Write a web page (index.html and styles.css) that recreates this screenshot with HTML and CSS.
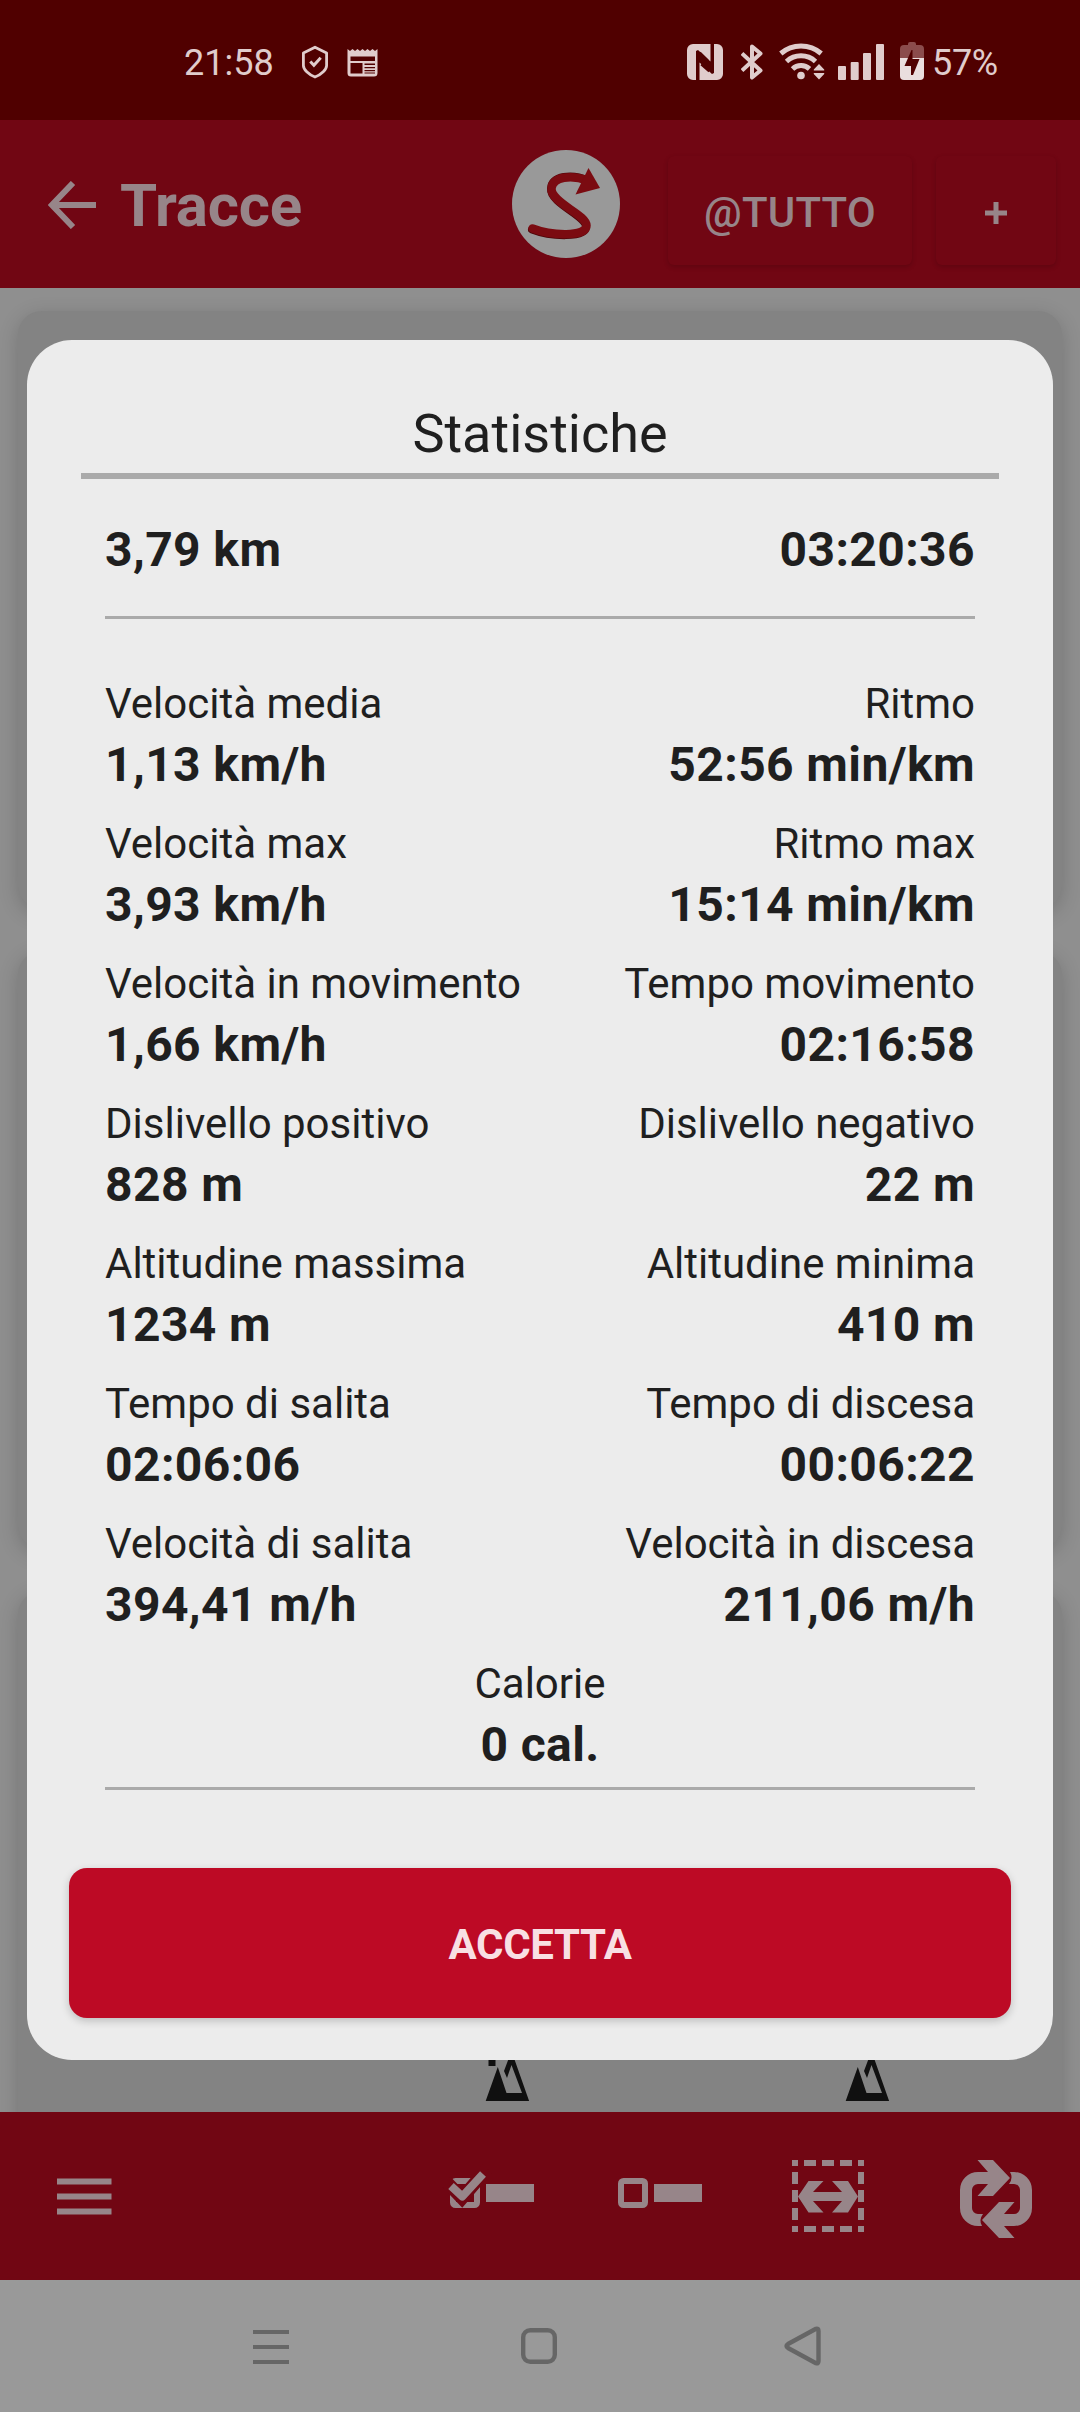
FILE: index.html
```html
<!DOCTYPE html>
<html lang="it">
<head>
<meta charset="utf-8">
<title>Tracce</title>
<link rel="stylesheet" href="styles.css">
</head>
<body>
<div class="screen">
  <div class="status">
    <span class="clock">21:58</span>
    <svg class="i-shield" width="28" height="34" viewBox="0 0 28 34" fill="none" stroke="currentColor"><path stroke-width="2.8" stroke-linejoin="round" d="M14 2.200 25.600 8v12.500c0 4-5 9-11.600 11.500C7.400 29.500 2.400 24.500 2.400 20.500V8Z"/><path stroke-width="3" d="m9.300 16.500 3.600 3.800 6.800-7.500"/></svg>
    <svg class="i-news" width="31" height="28" viewBox="0 0 31 28" fill="currentColor"><path fill-rule="evenodd" d="M.5 0 3 2l2.500-2L8 2l2.500-2L13 2l2.500-2L18 2l2.500-2L23 2l2.500-2L28 2l2.500-2v24a3.500 3.500 0 0 1-3.500 3.500H4A3.500 3.500 0 0 1 .5 24ZM3.500 7.500V12H28V7.500ZM3.500 14v10.500H15.500V14ZM17.500 14.500v1.500H28v-1.500ZM17.500 18v1.300H28V18ZM17.500 21v1.300H28V21ZM17.500 23.500v1H28v-1Z"/></svg>
    <div class="status-right">
      <svg width="36" height="36" viewBox="0 0 36 36"><path fill="currentColor" d="M6 0H23.500V17.500L11 6 9 7V36H6a6 6 0 0 1-6-6V6a6 6 0 0 1 6-6ZM27 0h3a6 6 0 0 1 6 6v24a6 6 0 0 1-6 6H12.500V18.500L25 30l2-1Z"/><path d="m12.500 9 8 8m-6 3 8 7" stroke="#500000" stroke-width="3.200"/></svg>
      <svg class="i-bt" width="22" height="36" viewBox="0 0 22 36" fill="none" stroke="currentColor" stroke-width="4" stroke-linejoin="round"><path d="M1 9.500 19.500 26.500 11 33.500V2.500L19.500 9.500 1 26.500"/></svg>
      <svg class="i-wifi" width="46" height="38" viewBox="0 0 46 38" fill="none" stroke="currentColor" stroke-width="5"><path d="M1.800 11.500a31 31 0 0 1 40.400 0M7.500 19.500a21.500 21.500 0 0 1 29 0M13.500 27a12.500 12.500 0 0 1 17-.2"/><g fill="currentColor" stroke="none"><circle cx="22" cy="33.500" r="3.800"/><path d="M34.800 27.500 40 22l5.200 5.500v1H34.800ZM34.800 31h10.400v1L40 37.500 34.800 32Z"/></g></svg>
      <svg class="i-signal" width="46" height="36" viewBox="0 0 46 36" fill="currentColor"><rect y="22" width="8" height="14" rx="1"/><rect x="12.700" y="18" width="8" height="18" rx="1"/><rect x="25" y="9" width="8" height="27" rx="1"/><rect x="38" width="8" height="36" rx="1"/></svg>
      <svg class="i-battery" width="24" height="38" viewBox="0 0 24 38"><path fill="#8b4c4c" d="M0 16V7a4 4 0 0 1 4-4h4V2a2 2 0 0 1 2-2h4a2 2 0 0 1 2 2v1h4a4 4 0 0 1 4 4v9Z"/><path fill="#eadede" d="M0 16h24v18a4 4 0 0 1-4 4H4a4 4 0 0 1-4-4Z"/><path fill="#500000" d="M11.500 8 4.500 24h6.500v9h2l6.500-16h-7V8Z"/></svg>
      <span class="percent">57%</span>
    </div>
  </div>

  <div class="header">
    <svg class="i-back" width="48" height="48" viewBox="0 0 48 48" fill="none" stroke="currentColor" stroke-width="6"><path d="M25 2 4 24l21 22M3 24h45"/></svg>
    <h1 class="title">Tracce</h1>
    <svg class="logo" width="108" height="108" viewBox="0 0 108 108"><circle cx="54" cy="54" r="54" fill="#999"/><path d="M20 79.500c18 7 54 9 54-3 0-11-36-23-35-38 1-13 21-15 37-8" fill="none" stroke="#4c0609" stroke-width="8" stroke-linecap="round"/><path d="M20.500 78.500c18 7 54 9 54-3 0-11-36-23-35-37 1-12 20-14 36-8" fill="none" stroke="#7b0b11" stroke-width="8.500" stroke-linecap="round"/><path d="M76.500 18 88 38 63.500 44.500Z" fill="#7b0b11"/></svg>
    <button class="hbtn hbtn-all">@TUTTO</button>
    <button class="hbtn hbtn-add" aria-label="+"><svg width="22" height="22" viewBox="0 0 22 22" stroke="currentColor" stroke-width="5"><path d="M11 0v22M0 11h22"/></svg></button>
  </div>

  <div class="tracks">
    <div class="track"></div>
    <div class="track"></div>
    <div class="track track-last">
      <svg class="peaks" width="46" height="54" viewBox="0 0 46 54"><path fill="#101010" d="M3.500 13h7v6h-7ZM.5 54.500 12.800 20 21.500 46h15.500L26.500 18 22 31l-3-7L26.500 4 44.300 54.500Z"/></svg>
      <svg class="peaks" width="46" height="54" viewBox="0 0 46 54"><path fill="#101010" d="M.5 54.500 12.800 20 21.500 46h15.500L26.500 18 22 31l-3-7L26.500 4 44.300 54.500Z"/></svg>
    </div>
  </div>

  <div class="toolbar">
    <svg class="tool tool-menu" viewBox="0 0 168 168" fill="currentColor"><path d="M57 66.500h54.500v6H57ZM57 81.500h54.500v6H57ZM57 96.500h54.500v6H57Z"/></svg>
    <svg class="tool" viewBox="0 0 168 168" fill="none" stroke="currentColor"><rect x="45" y="69" width="24" height="24" rx="2.500" stroke-width="6"/><path d="M38 69.500 54 86 79 57" stroke="#710613" stroke-width="13"/><path d="M43 74 54.300 84.500 75 62" stroke-width="8" stroke-linejoin="round"/><path d="M78 72h48v18H78Z" fill="currentColor" stroke="none"/></svg>
    <svg class="tool" viewBox="0 0 168 168"><rect x="45" y="69" width="24" height="24" rx="2.500" fill="none" stroke="currentColor" stroke-width="6"/><path d="M78 72h48v18H78Z" fill="currentColor"/></svg>
    <svg class="tool" viewBox="0 0 168 168" fill="currentColor"><path d="M51 48v72M117 48v72" stroke="currentColor" stroke-width="6" stroke-dasharray="6 6 12 6 12 6 12 6 6"/><path d="M60 51h48M60 117h48" stroke="currentColor" stroke-width="6" stroke-dasharray="12 6"/><path d="M54 84.500 64.500 69H79.500L69 80H98L88 69h16L114 84.500 104 100.500H88L98 89H69l10.500 11.500h-15Z"/></svg>
    <svg class="tool" viewBox="0 0 168 168" fill="currentColor"><g id="half"><path d="M76 72H66a6 6 0 0 0-6 6v18a6 6 0 0 0 6 6h5q-4.500 6-1 12h-4a18 18 0 0 1-18-18V78a18 18 0 0 1 18-18h10L65.500 48H81L98 66 81 84H65.500Z"/></g><use href="#half" transform="rotate(180 84 87)"/></svg>
  </div>

  <div class="navbar">
    <svg width="36" height="36" viewBox="0 0 36 36" fill="currentColor"><path d="M0 2h36v4H0ZM0 17h36v4H0ZM0 32h36v4H0Z"/></svg>
    <svg width="36" height="36" viewBox="0 0 36 36" fill="none" stroke="currentColor" stroke-width="4.400"><rect x="2.200" y="2.200" width="31.600" height="31.600" rx="7"/></svg>
    <svg width="38" height="40" viewBox="0 0 38 40" fill="none" stroke="currentColor" stroke-width="4.400" stroke-linejoin="round"><path d="M32 2.800Q34.500 2 34.500 5V35Q34.500 38 32 37.200L4 22Q1 20 4 18Z"/></svg>
  </div>

  <div class="dialog">
    <h2 class="dialog-title">Statistiche</h2>
    <div class="summary"><b>3,79 km</b><b>03:20:36</b></div>
    <div class="stats">
      <div class="stat"><span>Velocità media</span><b>1,13 km/h</b></div>
      <div class="stat"><span>Ritmo</span><b>52:56 min/km</b></div>
      <div class="stat"><span>Velocità max</span><b>3,93 km/h</b></div>
      <div class="stat"><span>Ritmo max</span><b>15:14 min/km</b></div>
      <div class="stat"><span>Velocità in movimento</span><b>1,66 km/h</b></div>
      <div class="stat"><span>Tempo movimento</span><b>02:16:58</b></div>
      <div class="stat"><span>Dislivello positivo</span><b>828 m</b></div>
      <div class="stat"><span>Dislivello negativo</span><b>22 m</b></div>
      <div class="stat"><span>Altitudine massima</span><b>1234 m</b></div>
      <div class="stat"><span>Altitudine minima</span><b>410 m</b></div>
      <div class="stat"><span>Tempo di salita</span><b>02:06:06</b></div>
      <div class="stat"><span>Tempo di discesa</span><b>00:06:22</b></div>
      <div class="stat"><span>Velocità di salita</span><b>394,41 m/h</b></div>
      <div class="stat"><span>Velocità in discesa</span><b>211,06 m/h</b></div>
      <div class="stat stat-wide"><span>Calorie</span><b>0 cal.</b></div>
    </div>
    <button class="accept">ACCETTA</button>
  </div>
</div>
</body>
</html>
```
FILE: styles.css
```css
* { box-sizing: border-box; }
body { margin: 0; font-family: Roboto, sans-serif; }
h1, h2 { margin: 0; }
svg { display: block; flex: none; }
button { border: 0; padding: 0; font-family: inherit; }

.screen {
  position: relative;
  display: flex;
  flex-direction: column;
  width: 1080px;
  height: 2412px;
  overflow: hidden;
  background: #8f8f8f;
}

.status {
  display: flex;
  align-items: center;
  height: 120px;
  padding: 3px 83px 0 184px;
  background: #500000;
  color: #e0cccc;
  font-size: 36px;
}
.clock, .percent { line-height: 42px; padding-top: 2px; }
.clock { width: 117px; }
.i-shield { margin-right: 18px; }
.i-news { margin-top: 2px; }
.status-right { display: flex; align-items: center; margin-left: auto; }
.i-bt { margin-left: 18px; }
.i-wifi { margin: 0 0 1px 16px; }
.i-signal { margin-left: 13px; }
.i-battery { margin: 0 8px 2px 16px; }
.percent { width: 65px; white-space: nowrap; letter-spacing: -.3px; }

.header {
  display: flex;
  align-items: center;
  height: 168px;
  padding: 0 24px 0 48px;
  background: #710613;
  color: #978589;
}
.i-back { margin-top: 1px; }
.title {
  width: 392px;
  padding-top: 4px;
  margin-left: 24px;
  font-size: 60px;
  line-height: 70px;
  font-weight: 700;
  letter-spacing: -.2px;
}
.hbtn {
  display: flex;
  align-items: center;
  justify-content: center;
  height: 109px;
  margin-top: 13px;
  padding-top: 4px;
  border-radius: 6px;
  background: #710613;
  color: #978589;
  font-size: 42px;
  font-weight: 500;
  letter-spacing: .2px;
  box-shadow: 0 2px 5px rgba(0, 0, 0, .16);
}
.hbtn-all { width: 244px; margin-left: 48px; }
.hbtn-add { width: 120px; margin-left: 24px; }

.tracks {
  display: flex;
  flex-direction: column;
  gap: 42px;
  height: 1824px;
  padding: 23px 18px 0;
  overflow: hidden;
}
.track {
  flex: none;
  height: 598px;
  border-radius: 24px;
  background: #838383;
  box-shadow: 0 5px 20px rgba(0, 0, 0, .18);
}
.track-last {
  display: flex;
  gap: 314px;
  padding: 456px 0 0 467px;
}

.toolbar {
  position: relative;
  display: flex;
  height: 168px;
  background: #710613;
  color: #978589;
}
.tool { width: 168px; height: 168px; }
.tool-menu { margin-right: auto; }

.navbar {
  display: flex;
  align-items: center;
  height: 132px;
  padding-left: 253px;
  gap: 232px;
  background: #999;
  color: #666;
}
.navbar svg:last-child { margin-left: -5px; }

.dialog {
  position: absolute;
  left: 27px;
  top: 340px;
  display: flex;
  flex-direction: column;
  width: 1026px;
  height: 1720px;
  padding: 62px 42px 42px;
  border-radius: 45px;
  background: #ececec;
  color: #1f1f1f;
}
.dialog-title {
  margin: 0 12px;
  padding-bottom: 7px;
  border-bottom: 6px solid #aaa;
  font-size: 54px;
  line-height: 64px;
  font-weight: 400;
  text-align: center;
}
.summary {
  display: flex;
  justify-content: space-between;
  margin: 43px 36px 0;
  padding-bottom: 38px;
  border-bottom: 3px solid #aaa;
  font-size: 48px;
  line-height: 56px;
  letter-spacing: .4px;
}
.stats {
  display: grid;
  grid-template-columns: auto auto;
  grid-auto-rows: 121px;
  row-gap: 19px;
  margin: 56px 36px 0;
  padding-bottom: 11px;
  border-bottom: 3px solid #aaa;
}
.stat { display: flex; flex-direction: column; }
.stat:nth-child(even) { align-items: flex-end; }
.stat span { font-size: 42px; line-height: 57px; }
.stat b { padding-top: 1px; font-size: 48px; line-height: 64px; letter-spacing: .4px; }
.stat-wide { grid-column: 1 / -1; align-items: center; }
.accept {
  height: 150px;
  margin-top: auto;
  padding-top: 3px;
  border-radius: 18px;
  background: #bd0a25;
  color: #f8dfe3;
  font-size: 42px;
  font-weight: 700;
  letter-spacing: -.3px;
  box-shadow: 0 3px 9px rgba(0, 0, 0, .2);
}
```
